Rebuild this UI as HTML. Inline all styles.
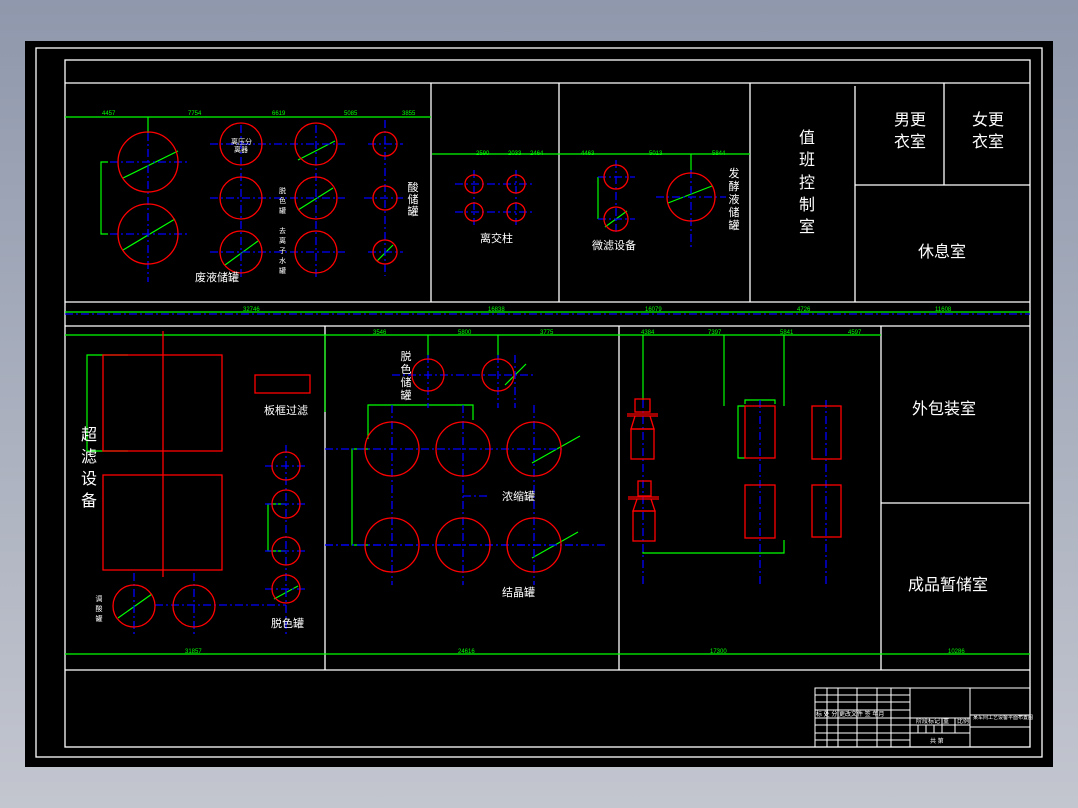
<!DOCTYPE html>
<html><head><meta charset="utf-8"><style>
html,body{margin:0;padding:0;width:1078px;height:808px;overflow:hidden;background:#a9afbe}
svg{display:block}
text{font-family:"Liberation Sans","Noto Sans CJK SC",sans-serif;fill:#fff}
</style></head><body>
<svg width="1078" height="808" viewBox="0 0 1078 808" xmlns="http://www.w3.org/2000/svg">
<defs><linearGradient id="bg" x1="0" y1="0" x2="0" y2="1"><stop offset="0" stop-color="#8f98ac"/><stop offset="1" stop-color="#c3c6cf"/></linearGradient></defs>
<rect width="1078" height="808" fill="url(#bg)"/>
<rect x="25" y="41" width="1028" height="726" fill="#000"/>
<g fill="none" stroke="#fff" stroke-width="1.3">
<rect x="36" y="48" width="1006" height="709"/>
<rect x="65" y="60" width="965" height="687"/>
<line x1="65" y1="83" x2="1030" y2="83"/>
<line x1="65" y1="302" x2="1030" y2="302"/>
<line x1="65" y1="326" x2="1030" y2="326"/>
<line x1="65" y1="670" x2="1030" y2="670"/>
<line x1="431" y1="83" x2="431" y2="302"/>
<line x1="559" y1="83" x2="559" y2="302"/>
<line x1="750" y1="83" x2="750" y2="302"/>
<line x1="855" y1="86" x2="855" y2="302"/>
<line x1="944" y1="83" x2="944" y2="185"/>
<line x1="855" y1="185" x2="1030" y2="185"/>
<line x1="325" y1="326" x2="325" y2="670"/>
<line x1="619" y1="326" x2="619" y2="670"/>
<line x1="881" y1="326" x2="881" y2="670"/>
<line x1="881" y1="503" x2="1030" y2="503"/>
</g>
<!-- green dimension lines -->
<g fill="none" stroke="#0f0" stroke-width="1.2">
<line x1="65" y1="117" x2="431" y2="117"/>
<line x1="148" y1="117" x2="148" y2="133"/>
<line x1="432" y1="154" x2="559" y2="154"/>
<line x1="559" y1="154" x2="750" y2="154"/>
<line x1="691" y1="154" x2="691" y2="173"/>
<line x1="65" y1="312" x2="1030" y2="312"/>
<line x1="65" y1="335" x2="881" y2="335"/>
<line x1="65" y1="654" x2="1030" y2="654"/>
<line x1="325" y1="335" x2="325" y2="412"/><line x1="428" y1="335" x2="428" y2="359"/><line x1="498" y1="335" x2="498" y2="359"/>
<line x1="643" y1="335" x2="643" y2="400"/><line x1="724" y1="335" x2="724" y2="406"/><line x1="784" y1="335" x2="784" y2="406"/>
<polyline points="108,162 101,162 101,234 108,234"/>
<polyline points="368,439 368,405 473,405 473,420"/>
<polyline points="370,449 352,449 352,545 370,545"/>
<polyline points="128,355 87,355 87,451 128,451"/>
<polyline points="286,504 268,504 268,551 286,551"/>
<polyline points="643,551 643,553 784,553 784,540"/>
<polyline points="745,406 738,406 738,458 745,458"/>
<polyline points="745,404 745,400 775,400 775,404"/>
<line x1="123" y1="178" x2="178" y2="151"/><line x1="123" y1="250" x2="175" y2="219"/>
<line x1="298" y1="160" x2="335" y2="141"/><line x1="298" y1="210" x2="333" y2="188"/>
<line x1="225" y1="265" x2="258" y2="241"/><line x1="377" y1="261" x2="393" y2="245"/>
<line x1="668" y1="203" x2="712" y2="186"/><line x1="605" y1="227" x2="627" y2="211"/>
<line x1="505" y1="385" x2="526" y2="364"/>
<line x1="532" y1="463" x2="580" y2="436"/><line x1="532" y1="558" x2="578" y2="532"/>
<line x1="118" y1="618" x2="152" y2="594"/><line x1="274" y1="599" x2="298" y2="586"/>
<line x1="598" y1="219" x2="598" y2="177"/>
</g>
<!-- blue centerlines -->
<g fill="none" stroke="#00f" stroke-width="1.3" stroke-dasharray="8 3 2 3">
<line x1="65" y1="314" x2="1030" y2="314"/>
<line x1="148" y1="133" x2="148" y2="282"/><line x1="110" y1="162" x2="190" y2="162"/><line x1="110" y1="234" x2="190" y2="234"/>
<line x1="241" y1="125" x2="241" y2="280"/><line x1="316" y1="125" x2="316" y2="280"/><line x1="385" y1="120" x2="385" y2="276"/>
<line x1="210" y1="144" x2="345" y2="144"/><line x1="210" y1="198" x2="345" y2="198"/><line x1="210" y1="252" x2="345" y2="252"/>
<line x1="368" y1="144" x2="403" y2="144"/><line x1="364" y1="198" x2="403" y2="198"/><line x1="368" y1="252" x2="403" y2="252"/>
<line x1="455" y1="184" x2="535" y2="184"/><line x1="455" y1="212" x2="535" y2="212"/><line x1="474" y1="170" x2="474" y2="225"/><line x1="516" y1="170" x2="516" y2="225"/>
<line x1="598" y1="177" x2="635" y2="177"/><line x1="598" y1="219" x2="635" y2="219"/><line x1="616" y1="160" x2="616" y2="235"/>
<line x1="656" y1="197" x2="726" y2="197"/><line x1="691" y1="170" x2="691" y2="248"/>
<line x1="392" y1="375" x2="535" y2="375"/><line x1="428" y1="355" x2="428" y2="408"/><line x1="498" y1="355" x2="498" y2="408"/><line x1="515" y1="355" x2="515" y2="408"/>
<line x1="325" y1="449" x2="563" y2="449"/><line x1="325" y1="545" x2="583" y2="545"/><line x1="325" y1="545" x2="607" y2="545"/>
<line x1="392" y1="405" x2="392" y2="585"/><line x1="463" y1="405" x2="463" y2="585"/><line x1="534" y1="405" x2="534" y2="585"/>
<line x1="463" y1="496" x2="490" y2="496"/>
<line x1="643" y1="400" x2="643" y2="585"/><line x1="760" y1="400" x2="760" y2="585"/><line x1="826" y1="400" x2="826" y2="585"/>
<line x1="286" y1="445" x2="286" y2="635"/><line x1="265" y1="466" x2="308" y2="466"/><line x1="265" y1="504" x2="308" y2="504"/><line x1="265" y1="551" x2="308" y2="551"/><line x1="265" y1="589" x2="308" y2="589"/>
<line x1="134" y1="573" x2="134" y2="635"/><line x1="194" y1="573" x2="194" y2="635"/><line x1="155" y1="605" x2="286" y2="605"/>
</g>
<!-- red shapes -->
<g fill="none" stroke="#f00" stroke-width="1.3">
<circle cx="148" cy="162" r="30"/><circle cx="148" cy="234" r="30"/>
<circle cx="241" cy="144" r="21"/><circle cx="241" cy="198" r="21"/><circle cx="241" cy="252" r="21"/>
<circle cx="316" cy="144" r="21"/><circle cx="316" cy="198" r="21"/><circle cx="316" cy="252" r="21"/>
<circle cx="385" cy="144" r="12"/><circle cx="385" cy="198" r="12"/><circle cx="385" cy="252" r="12"/>
<circle cx="474" cy="184" r="9"/><circle cx="516" cy="184" r="9"/><circle cx="474" cy="212" r="9"/><circle cx="516" cy="212" r="9"/>
<circle cx="616" cy="177" r="12"/><circle cx="616" cy="219" r="12"/><circle cx="691" cy="197" r="24"/>
<circle cx="428" cy="375" r="16"/><circle cx="498" cy="375" r="16"/>
<circle cx="392" cy="449" r="27"/><circle cx="463" cy="449" r="27"/><circle cx="534" cy="449" r="27"/>
<circle cx="392" cy="545" r="27"/><circle cx="463" cy="545" r="27"/><circle cx="534" cy="545" r="27"/>
<rect x="103" y="355" width="119" height="96"/><rect x="103" y="475" width="119" height="95"/>
<line x1="163" y1="331" x2="163" y2="577"/>
<rect x="255" y="375" width="55" height="18"/>
<circle cx="286" cy="466" r="14"/><circle cx="286" cy="504" r="14"/><circle cx="286" cy="551" r="14"/><circle cx="286" cy="589" r="14"/>
<circle cx="134" cy="606" r="21"/><circle cx="194" cy="606" r="21"/>
<rect x="635" y="399" width="15" height="13"/><line x1="627" y1="414" x2="658" y2="414"/><line x1="627" y1="416" x2="658" y2="416"/>
<polyline points="635,416 631,429 654,429 650,416"/><rect x="631" y="429" width="23" height="30"/>
<rect x="638" y="481" width="13" height="15"/><line x1="628" y1="497" x2="659" y2="497"/><line x1="628" y1="499" x2="659" y2="499"/>
<polyline points="637,499 633,511 655,511 651,499"/><rect x="633" y="511" width="22" height="30"/>
<rect x="745" y="406" width="30" height="52"/><rect x="745" y="485" width="30" height="53"/>
<rect x="812" y="406" width="29" height="53"/><rect x="812" y="485" width="29" height="52"/>
</g>
<!-- room labels -->
<g font-size="16">
<text x="807" y="143" text-anchor="middle">值</text><text x="807" y="165" text-anchor="middle">班</text>
<text x="807" y="188" text-anchor="middle">控</text><text x="807" y="210" text-anchor="middle">制</text><text x="807" y="232" text-anchor="middle">室</text>
<text x="910" y="125" text-anchor="middle">男更</text><text x="910" y="147" text-anchor="middle">衣室</text>
<text x="988" y="125" text-anchor="middle">女更</text><text x="988" y="147" text-anchor="middle">衣室</text>
<text x="942" y="257" text-anchor="middle">休息室</text>
<text x="944" y="414" text-anchor="middle">外包装室</text>
<text x="948" y="590" text-anchor="middle">成品暂储室</text>
<text x="89" y="440" text-anchor="middle">超</text><text x="89" y="462" text-anchor="middle">滤</text><text x="89" y="484" text-anchor="middle">设</text><text x="89" y="506" text-anchor="middle">备</text>
</g>
<g font-size="11">
<text x="195" y="281">废液储罐</text>
<text x="413" y="191" text-anchor="middle">酸</text><text x="413" y="203" text-anchor="middle">储</text><text x="413" y="215" text-anchor="middle">罐</text>
<text x="480" y="242">离交柱</text>
<text x="592" y="249">微滤设备</text>
<text x="734" y="177" text-anchor="middle">发</text><text x="734" y="190" text-anchor="middle">酵</text><text x="734" y="203" text-anchor="middle">液</text><text x="734" y="216" text-anchor="middle">储</text><text x="734" y="229" text-anchor="middle">罐</text>
<text x="406" y="360" text-anchor="middle">脱</text><text x="406" y="373" text-anchor="middle">色</text><text x="406" y="386" text-anchor="middle">储</text><text x="406" y="399" text-anchor="middle">罐</text>
<text x="264" y="414">板框过滤</text>
<text x="502" y="500">浓缩罐</text>
<text x="502" y="596">结晶罐</text>
<text x="271" y="627">脱色罐</text>
</g>
<g font-size="7">
<text x="231" y="144">离压分</text><text x="234" y="152">离器</text>
<text x="99" y="601" text-anchor="middle">调</text><text x="99" y="611" text-anchor="middle">酸</text><text x="99" y="621" text-anchor="middle">罐</text>
<text x="279" y="193">脱</text><text x="279" y="203">色</text><text x="279" y="213">罐</text>
<text x="279" y="233">去</text><text x="279" y="243">离</text><text x="279" y="253">子</text><text x="279" y="263">水</text><text x="279" y="273">罐</text>
</g>
<!-- dims text -->
<g font-size="6" fill="#0f0" style="fill:#0f0">
<text x="102" y="115" style="fill:#0f0">4457</text><text x="188" y="115" style="fill:#0f0">7754</text><text x="272" y="115" style="fill:#0f0">6619</text><text x="344" y="115" style="fill:#0f0">5085</text><text x="402" y="115" style="fill:#0f0">3855</text>
<text x="243" y="311" style="fill:#0f0">32746</text><text x="488" y="311" style="fill:#0f0">16838</text><text x="645" y="311" style="fill:#0f0">16079</text><text x="797" y="311" style="fill:#0f0">4726</text><text x="935" y="311" style="fill:#0f0">11608</text>
<text x="185" y="653" style="fill:#0f0">31857</text><text x="458" y="653" style="fill:#0f0">24616</text><text x="710" y="653" style="fill:#0f0">17300</text><text x="948" y="653" style="fill:#0f0">10286</text>
<text x="373" y="334" style="fill:#0f0">3546</text><text x="458" y="334" style="fill:#0f0">5800</text><text x="540" y="334" style="fill:#0f0">3775</text><text x="641" y="334" style="fill:#0f0">4384</text><text x="708" y="334" style="fill:#0f0">7397</text><text x="780" y="334" style="fill:#0f0">5841</text><text x="848" y="334" style="fill:#0f0">4597</text>
<text x="476" y="155" style="fill:#0f0">2590</text><text x="508" y="155" style="fill:#0f0">2033</text><text x="530" y="155" style="fill:#0f0">2464</text><text x="581" y="155" style="fill:#0f0">4463</text><text x="649" y="155" style="fill:#0f0">5013</text><text x="712" y="155" style="fill:#0f0">5844</text>
</g>
<!-- title block -->
<g fill="none" stroke="#fff" stroke-width="1">
<rect x="815" y="688" width="215" height="59"/>
<line x1="970" y1="688" x2="970" y2="747"/><line x1="910" y1="688" x2="910" y2="747"/>
<line x1="970" y1="715" x2="1030" y2="715"/><line x1="970" y1="727" x2="1030" y2="727"/>
<line x1="815" y1="695" x2="910" y2="695"/><line x1="815" y1="702" x2="910" y2="702"/><line x1="815" y1="710" x2="910" y2="710"/><line x1="815" y1="718" x2="970" y2="718"/><line x1="815" y1="725" x2="970" y2="725"/><line x1="815" y1="733" x2="970" y2="733"/><line x1="815" y1="740" x2="910" y2="740"/>
<line x1="827" y1="688" x2="827" y2="747"/><line x1="838" y1="688" x2="838" y2="747"/><line x1="857" y1="688" x2="857" y2="747"/><line x1="877" y1="688" x2="877" y2="747"/><line x1="891" y1="688" x2="891" y2="747"/>
<line x1="918" y1="725" x2="918" y2="733"/><line x1="926" y1="725" x2="926" y2="733"/><line x1="934" y1="725" x2="934" y2="733"/><line x1="942" y1="718" x2="942" y2="733"/><line x1="955" y1="718" x2="955" y2="733"/>
</g>
<g font-size="6">
<text x="816" y="716">标 处 分 更改文件 签 年月</text>
<text x="916" y="723">阶段标记</text><text x="943" y="723">重</text><text x="957" y="723">比例</text>
<text x="930" y="743">共 第</text>
<text x="973" y="719" font-size="5">某车间工艺设备平面布置图</text>
</g>
</svg>
</body></html>
